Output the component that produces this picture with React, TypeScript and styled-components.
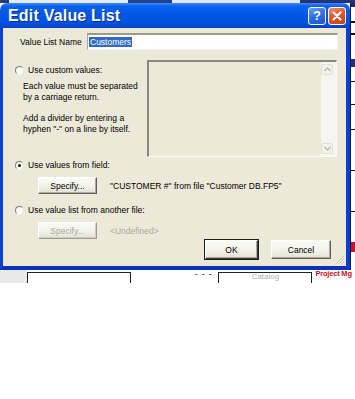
import React from 'react';
import styled, { createGlobalStyle, css } from 'styled-components';

const GlobalStyle = createGlobalStyle`
  html, body { margin: 0; padding: 0; background: #fff; }
  body { font-family: "Liberation Sans", Arial, sans-serif; }
`;

const UI_FONT = `"Liberation Sans", Arial, sans-serif`;

const Screen = styled.div`
  width: 355px;
  height: 399px;
  overflow: hidden;
  display: flex;
  flex-direction: column;
  background: #fff;
`;

const TopStrip = styled.div`
  height: 3px;
  flex: none;
  background: linear-gradient(
    90deg,
    #2a3a78 0 9px,
    #e6ebf4 9px 128px,
    #24408f 128px 172px,
    #dfe5f1 172px 300px,
    #22347a 300px 355px
  );
`;

const MainRow = styled.div`
  display: flex;
  height: 267px;
  flex: none;
`;

const Dialog = styled.div`
  width: 350px;
  display: flex;
  flex-direction: column;
  flex: none;
`;

const TitleBar = styled.div`
  height: 25px;
  flex: none;
  border-radius: 7px 7px 0 0;
  background: linear-gradient(
    180deg,
    #3d8ef8 0%,
    #0e62ee 12%,
    #0057e6 45%,
    #0052de 80%,
    #0041c4 100%
  );
  display: flex;
  align-items: center;
  padding: 0 4px 0 8px;
  gap: 2px;
  box-sizing: border-box;
`;

const TitleText = styled.div`
  flex: 1;
  font: bold 16px ${UI_FONT};
  color: #fff;
  text-shadow: 1px 1px 0 #0b2a8a;
  letter-spacing: 0.2px;
  padding-top: 1px;
`;

const CaptionButton = styled.div<{ $kind: 'help' | 'close' }>`
  width: 18px;
  height: 18px;
  box-sizing: border-box;
  border: 1px solid #fff;
  border-radius: 3px;
  display: flex;
  align-items: center;
  justify-content: center;
  color: #fff;
  font: bold 13px ${UI_FONT};
  ${(p) =>
    p.$kind === 'help'
      ? css`
          background: linear-gradient(160deg, #6aa2fb 0%, #2f6fe8 45%, #1f55d2 100%);
        `
      : css`
          background: linear-gradient(160deg, #f0916c 0%, #e2562c 45%, #c5401b 100%);
        `}
`;

const Client = styled.div`
  position: relative;
  flex: 1;
  background: #ece9d8;
  border-left: 3px solid #0a3fd0;
  border-right: 4px solid #0a3fd0;
  border-bottom: 4px solid #0a31b8;
  padding: 5px 8px 0 12px;
  display: flex;
  flex-direction: column;
  font: 8.5px ${UI_FONT};
  color: #000;
`;

const NameRow = styled.div`
  display: flex;
  align-items: center;
  height: 17px;
  padding-left: 5px;
`;

const NameLabel = styled.div`
  width: 67px;
`;

const NameInput = styled.div`
  width: 251px;
  height: 17px;
  box-sizing: border-box;
  background: #fff;
  border-top: 2px solid #9d9a8c;
  border-left: 1px solid #aaa799;
  border-right: 1px solid #f4f3ee;
  border-bottom: 1px solid #f4f3ee;
  display: flex;
  align-items: center;
  padding-left: 1px;
`;

const Selected = styled.span`
  background: #316ac5;
  color: #fff;
  padding: 0 1px;
  line-height: 10px;
`;

const UpperRow = styled.div`
  display: flex;
  margin-top: 10px;
  height: 97px;
`;

const LeftCol = styled.div`
  width: 132px;
  padding-top: 4px;
  display: flex;
  flex-direction: column;
`;

const RadioRow = styled.div<{ $gapTop?: number; $disabled?: boolean }>`
  display: flex;
  align-items: center;
  gap: 4px;
  height: 12px;
  margin-top: ${(p) => p.$gapTop ?? 0}px;
  color: ${(p) => (p.$disabled ? '#a7a595' : '#000')};
`;

const RadioCircle = styled.div<{ $checked?: boolean }>`
  width: 9px;
  height: 9px;
  box-sizing: border-box;
  border-radius: 50%;
  background: #fbfbf8;
  border: 1px solid;
  border-color: #7d7b70 #e4e2d6 #f4f3ee #7d7b70;
  display: flex;
  align-items: center;
  justify-content: center;
  &::after {
    content: '';
    display: ${(p) => (p.$checked ? 'block' : 'none')};
    width: 3px;
    height: 3px;
    border-radius: 50%;
    background: #111;
  }
`;

const Para = styled.div<{ $gapTop: number }>`
  margin-left: 8px;
  margin-top: ${(p) => p.$gapTop}px;
  line-height: 11px;
  white-space: nowrap;
`;

const ListBox = styled.div`
  width: 190px;
  height: 97px;
  box-sizing: border-box;
  border-top: 2px solid #8a887b;
  border-left: 2px solid #8a887b;
  border-right: 1px solid #fbfaf5;
  border-bottom: 1px solid #fbfaf5;
  background: #ece9d8;
  display: flex;
  justify-content: flex-end;
`;

const ScrollBar = styled.div`
  width: 14px;
  background: #f6f5ef;
  display: flex;
  flex-direction: column;
  justify-content: space-between;
  padding: 2px 1px 2px 0;
`;

const ScrollArrow = styled.div`
  width: 12px;
  height: 11px;
  box-sizing: border-box;
  border: 1px solid #e2e0d4;
  border-radius: 2px;
  background: #f2f1ea;
  display: flex;
  align-items: center;
  justify-content: center;
`;

const FieldRow = styled.div<{ $gapTop: number }>`
  display: flex;
  align-items: center;
  gap: 13px;
  padding-left: 23px;
  margin-top: ${(p) => p.$gapTop}px;
`;

const PushButton = styled.div<{ $w: number; $h: number; $default?: boolean; $disabled?: boolean }>`
  width: ${(p) => p.$w}px;
  height: ${(p) => p.$h}px;
  box-sizing: border-box;
  display: flex;
  align-items: center;
  justify-content: center;
  background: linear-gradient(180deg, #fbfbf7 0%, #f1f0e8 60%, #e4e2d6 100%);
  border: 1px solid;
  border-color: #ffffff #5f5e58 #5f5e58 #ffffff;
  box-shadow: inset -1px -1px 0 #aeac9f;
  color: ${(p) => (p.$disabled ? '#aca899' : '#000')};
  font: 8.5px ${UI_FONT};
  ${(p) =>
    p.$default &&
    css`
      outline: 1px solid #1e1e1e;
      outline-offset: 0;
      border-color: #ffffff #3a3935 #3a3935 #ffffff;
    `}
  ${(p) =>
    p.$disabled &&
    css`
      border-color: #ffffff #9c9a90 #9c9a90 #ffffff;
      box-shadow: inset -1px -1px 0 #cfcdc1;
    `}
`;

const FieldText = styled.div<{ $muted?: boolean }>`
  white-space: nowrap;
  color: ${(p) => (p.$muted ? '#aca899' : '#000')};
`;

const BottomArea = styled.div`
  display: flex;
  justify-content: space-between;
  margin-top: 10px;
`;

const BottomLeft = styled.div`
  display: flex;
  flex-direction: column;
`;

const DialogButtons = styled.div`
  display: flex;
  gap: 13px;
  margin-top: 36px;
  margin-right: 7px;
`;

const Grip = styled.svg`
  position: absolute;
  right: 1px;
  bottom: 1px;
`;

const SideStrip = styled.div`
  flex: 1;
  display: flex;
  flex-direction: column;
  background: #fff;
  border-left: 1px solid #1a1a40;
`;

const SideBlock = styled.div<{ $h: number; $c: string }>`
  height: ${(p) => p.$h}px;
  background: ${(p) => p.$c};
  flex: none;
`;

const BottomStrip = styled.div`
  height: 13px;
  flex: none;
  display: flex;
  background: #fff;
  overflow: hidden;
`;

const GreyPad = styled.div<{ $w: number }>`
  width: ${(p) => p.$w}px;
  background: #e9e9e9;
  flex: none;
`;

const OutlineBox = styled.div<{ $w: number; $ml: number }>`
  width: ${(p) => p.$w}px;
  margin-left: ${(p) => p.$ml}px;
  margin-top: 2px;
  box-sizing: border-box;
  border: 1px solid #222;
  border-bottom: none;
  background: #fff;
  flex: none;
  font: 8px ${UI_FONT};
  color: #b0b0b0;
  text-align: center;
  line-height: 8px;
  overflow: hidden;
`;

const Dashes = styled.div`
  margin-left: 64px;
  font: bold 8px ${UI_FONT};
  color: #444;
  letter-spacing: 1px;
  line-height: 8px;
  flex: none;
`;

const RedLabel = styled.div`
  margin-left: 3px;
  margin-top: -1px;
  font: bold 7.5px ${UI_FONT};
  color: #d0102a;
  white-space: nowrap;
  line-height: 9px;
  letter-spacing: -0.2px;
  flex: none;
`;

const UpArrow = () => (
  <svg width="7" height="5" viewBox="0 0 7 5">
    <path d="M0.5 4 L3.5 1 L6.5 4" fill="none" stroke="#b8b6aa" strokeWidth="1.3" />
  </svg>
);

const DownArrow = () => (
  <svg width="7" height="5" viewBox="0 0 7 5">
    <path d="M0.5 1 L3.5 4 L6.5 1" fill="none" stroke="#b8b6aa" strokeWidth="1.3" />
  </svg>
);

export default function App() {
  return (
    <>
      <GlobalStyle />
      <Screen>
        <TopStrip />
        <MainRow>
          <Dialog>
            <TitleBar>
              <TitleText>Edit Value List</TitleText>
              <CaptionButton $kind="help">?</CaptionButton>
              <CaptionButton $kind="close">
                <svg width="10" height="10" viewBox="0 0 10 10">
                  <path d="M1.5 1.5 L8.5 8.5 M8.5 1.5 L1.5 8.5" stroke="#fff" strokeWidth="2.2" strokeLinecap="round" />
                </svg>
              </CaptionButton>
            </TitleBar>
            <Client>
              <NameRow>
                <NameLabel>Value List Name</NameLabel>
                <NameInput>
                  <Selected>Customers</Selected>
                </NameInput>
              </NameRow>

              <UpperRow>
                <LeftCol>
                  <RadioRow>
                    <RadioCircle />
                    <span>Use custom values:</span>
                  </RadioRow>
                  <Para $gapTop={5}>
                    Each value must be separated
                    <br />
                    by a carriage return.
                  </Para>
                  <Para $gapTop={10}>
                    Add a divider by entering a
                    <br />
                    hyphen "-" on a line by itself.
                  </Para>
                </LeftCol>
                <ListBox>
                  <ScrollBar>
                    <ScrollArrow>
                      <UpArrow />
                    </ScrollArrow>
                    <ScrollArrow>
                      <DownArrow />
                    </ScrollArrow>
                  </ScrollBar>
                </ListBox>
              </UpperRow>

              <RadioRow $gapTop={2}>
                <RadioCircle $checked />
                <span>Use values from field:</span>
              </RadioRow>
              <FieldRow $gapTop={6}>
                <PushButton $w={59} $h={17}>Specify...</PushButton>
                <FieldText>"CUSTOMER #" from file "Customer DB.FP5"</FieldText>
              </FieldRow>

              <BottomArea>
                <BottomLeft>
                  <RadioRow>
                    <RadioCircle />
                    <span>Use value list from another file:</span>
                  </RadioRow>
                  <FieldRow $gapTop={6}>
                    <PushButton $w={59} $h={17} $disabled>Specify...</PushButton>
                    <FieldText $muted>&lt;Undefined&gt;</FieldText>
                  </FieldRow>
                </BottomLeft>
                <DialogButtons>
                  <PushButton $w={53} $h={19} $default>OK</PushButton>
                  <PushButton $w={60} $h={19}>Cancel</PushButton>
                </DialogButtons>
              </BottomArea>

              <Grip width="11" height="11" viewBox="0 0 11 11">
                <path d="M10 2 L2 10 M10 5 L5 10 M10 8 L8 10" stroke="#c4c1b0" strokeWidth="1" />
                <path d="M10 3 L3 10 M10 6 L6 10 M10 9 L9 10" stroke="#fff" strokeWidth="1" />
              </Grip>
            </Client>
          </Dialog>
          <SideStrip>
            <SideBlock $h={4} $c="#1b2a6a" />
            <SideBlock $h={14} $c="#fff" />
            <SideBlock $h={2} $c="#111" />
            <SideBlock $h={10} $c="#fff" />
            <SideBlock $h={2} $c="#111" />
            <SideBlock $h={24} $c="#fff" />
            <SideBlock $h={8} $c="#1d2f88" />
            <SideBlock $h={14} $c="#fff" />
            <SideBlock $h={1} $c="#111" />
            <SideBlock $h={22} $c="#fff" />
            <SideBlock $h={1} $c="#111" />
            <SideBlock $h={24} $c="#fff" />
            <SideBlock $h={1} $c="#111" />
            <SideBlock $h={40} $c="#fff" />
            <SideBlock $h={1} $c="#111" />
            <SideBlock $h={40} $c="#fff" />
            <SideBlock $h={1} $c="#111" />
            <SideBlock $h={30} $c="#fff" />
            <SideBlock $h={10} $c="#d0102a" />
          </SideStrip>
        </MainRow>
        <BottomStrip>
          <GreyPad $w={27} />
          <OutlineBox $w={104} $ml={0} />
          <Dashes>- - -</Dashes>
          <OutlineBox $w={94} $ml={6}>Catalog</OutlineBox>
          <RedLabel>Project Mg</RedLabel>
        </BottomStrip>
      </Screen>
    </>
  );
}
